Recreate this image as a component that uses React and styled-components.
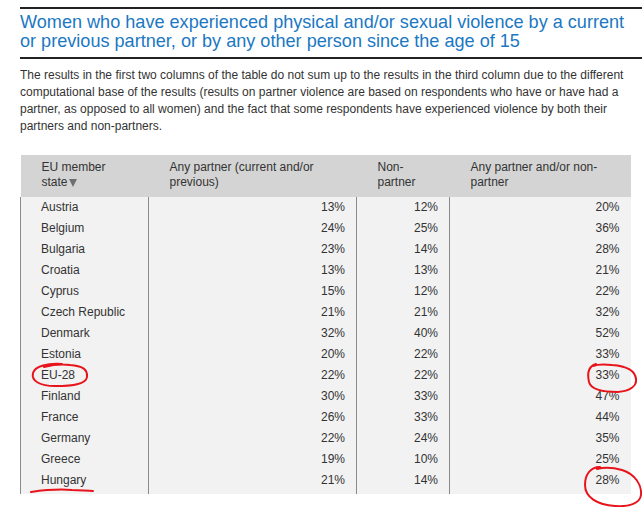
import React from 'react'
import styled, { createGlobalStyle } from 'styled-components'

const GlobalStyle = createGlobalStyle`
  html, body {
    margin: 0;
    padding: 0;
    background: #fff;
  }
  body {
    font-family: "Liberation Sans", Arial, sans-serif;
    color: #333;
  }
`

const Page = styled.div`
  position: relative;
  width: 642px;
  height: 507px;
  overflow: hidden;
  padding: 7px 0 0 20px;
  box-sizing: border-box;
`

const TitleBlock = styled.div`
  border-top: 2px solid #222;
  border-bottom: 2px solid #222;
  padding: 4px 0 6px 0;
`

const Title = styled.h2`
  margin: 0;
  font-weight: normal;
  font-size: 18.1px;
  line-height: 19px;
  color: #1b78c3;
  white-space: nowrap;
`

const Intro = styled.p`
  margin: 8px 0 0 0;
  width: 615px;
  font-size: 12px;
  line-height: 17px;
  color: #333;
`

const Table = styled.table`
  margin-top: 20px;
  border-collapse: collapse;
  width: 610px;
  table-layout: fixed;
  font-size: 12px;
  color: #333;
`

const HeadCell = styled.th`
  background: #d4d4d4;
  font-weight: normal;
  text-align: left;
  vertical-align: top;
  height: 42px;
  box-sizing: border-box;
  padding: 5px 8px 0 21px;
  line-height: 15px;
  width: ${p => p.$w}px;
`

const Arrow = styled.span`
  display: inline-block;
  width: 0;
  height: 0;
  margin-left: 1px;
  border-left: 4px solid transparent;
  border-right: 4px solid transparent;
  border-top: 8px solid #6f6f6f;
  vertical-align: -1px;
`

const Row = styled.tr`
  &:last-child td {
    height: 24px;
    vertical-align: top;
  }
`

const Cell = styled.td`
  background: #f2f2f2;
  border-left: 1px solid #8a8a8a;
  height: 21px;
  padding: 0 ${p => (p.$num ? '11px' : '8px')} 0 ${p => (p.$num ? '8px' : '20px')};
  text-align: ${p => (p.$num ? 'right' : 'left')};
  line-height: 21px;
`

const Marks = styled.svg`
  position: absolute;
  left: 0;
  top: 0;
  pointer-events: none;
`

const rows = [
  ['Austria', 13, 12, 20],
  ['Belgium', 24, 25, 36],
  ['Bulgaria', 23, 14, 28],
  ['Croatia', 13, 13, 21],
  ['Cyprus', 15, 12, 22],
  ['Czech Republic', 21, 21, 32],
  ['Denmark', 32, 40, 52],
  ['Estonia', 20, 22, 33],
  ['EU-28', 22, 22, 33],
  ['Finland', 30, 33, 47],
  ['France', 26, 33, 44],
  ['Germany', 22, 24, 35],
  ['Greece', 19, 10, 25],
  ['Hungary', 21, 14, 28],
]

export default function App() {
  return (
    <>
      <GlobalStyle />
      <Page>
        <TitleBlock>
          <Title>
            Women who have experienced physical and/or sexual violence by a current
            <br />
            or previous partner, or by any other person since the age of 15
          </Title>
        </TitleBlock>
        <Intro>
          The results in the first two columns of the table do not sum up to the results in the third column due to the different
          computational base of the results (results on partner violence are based on respondents who have or have had a
          partner, as opposed to all women) and the fact that some respondents have experienced violence by both their
          partners and non-partners.
        </Intro>
        <Table>
          <thead>
            <tr>
              <HeadCell $w={128}>EU member<br />state<Arrow /></HeadCell>
              <HeadCell $w={208}>Any partner (current and/or previous)</HeadCell>
              <HeadCell $w={93}>Non-partner</HeadCell>
              <HeadCell $w={181}>Any partner and/or non-partner</HeadCell>
            </tr>
          </thead>
          <tbody>
            {rows.map(([name, a, b, c]) => (
              <Row key={name}>
                <Cell>{name}</Cell>
                <Cell $num>{a}%</Cell>
                <Cell $num>{b}%</Cell>
                <Cell $num>{c}%</Cell>
              </Row>
            ))}
          </tbody>
        </Table>
        <Marks width="642" height="507" viewBox="0 0 642 507">
          <g fill="none" stroke="#e8141b" strokeWidth="2" strokeLinecap="round">
            <path d="M62 364 C48 363 35 366 33 373 C31 381 40 386 55 386 C70 386 86 385 87 377 C88 369 82 366 70 365 C62 364 52 365 44 367" />
            <path d="M31 492 C45 490 60 489 72 490 C80 490 87 491 93 491" />
            <path d="M596 364 C589 366 587 373 589 382 C591 390 603 392 618 392 C630 391 637 386 636 379 C635 370 626 366 612 365 C603 364 598 364 593 366" />
            <path d="M600 467 C590 467 585 475 585 485 C585 497 597 505 615 506 C630 507 640 503 641 495 C642 485 635 474 622 470 C612 467 604 467 597 469" />
          </g>
        </Marks>
      </Page>
    </>
  )
}
